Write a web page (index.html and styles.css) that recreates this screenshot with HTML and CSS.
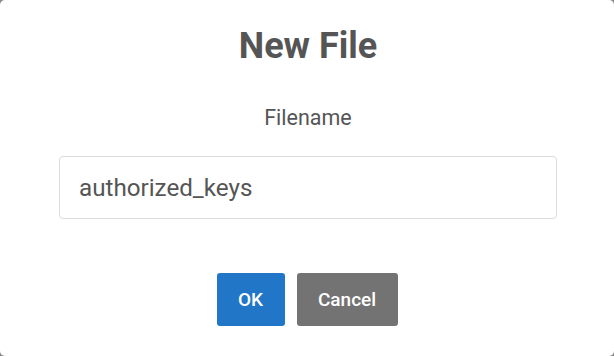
FILE: index.html
```html
<!DOCTYPE html>
<html>
<head>
<meta charset="utf-8">
<link rel="stylesheet" href="styles.css">
</head>
<body>
<div class="dialog">
  <h1 class="title">New File</h1>
  <label class="label" for="fname">Filename</label>
  <input class="field" id="fname" type="text" value="authorized_keys">
  <div class="actions">
    <button class="btn btn-ok">OK</button>
    <button class="btn btn-cancel">Cancel</button>
  </div>
</div>
</body>
</html>
```
FILE: styles.css
```css
html, body {
  margin: 0;
  padding: 0;
  height: 100%;
  background: #8a8a8a;
}
.dialog {
  box-sizing: border-box;
  height: 356px;
  width: 614px;
  background: #fff;
  border-radius: 5px;
  display: flex;
  flex-direction: column;
  align-items: center;
  padding-top: 24px;
  padding-left: 2px;
  font-family: Roboto, "Liberation Sans", sans-serif;
  color: #555;
}
.title {
  margin: 0;
  font-size: 36px;
  line-height: 44px;
  font-weight: 700;
  color: #555;
}
.label {
  margin-top: 38px;
  font-size: 21.5px;
  line-height: 24px;
  color: #555;
}
.field {
  box-sizing: border-box;
  margin-top: 26px;
  width: 498px;
  height: 63px;
  border: 1px solid #dcdcdc;
  border-radius: 4px;
  padding: 0 19px;
  font-family: Roboto, "Liberation Sans", sans-serif;
  font-size: 24.2px;
  color: #555;
  outline: none;
  background: #fff;
}
.actions {
  margin-top: 54px;
  margin-right: 2px;
  display: flex;
  gap: 12px;
}
.btn {
  height: 53px;
  border: none;
  border-radius: 3px;
  padding: 0;
  font-family: Roboto, "Liberation Sans", sans-serif;
  font-size: 19px;
  font-weight: 500;
  color: #fff;
}
.btn-ok {
  background: #2176c7;
  width: 68px;
}
.btn-cancel {
  background: #737373;
  width: 101px;
}
```
